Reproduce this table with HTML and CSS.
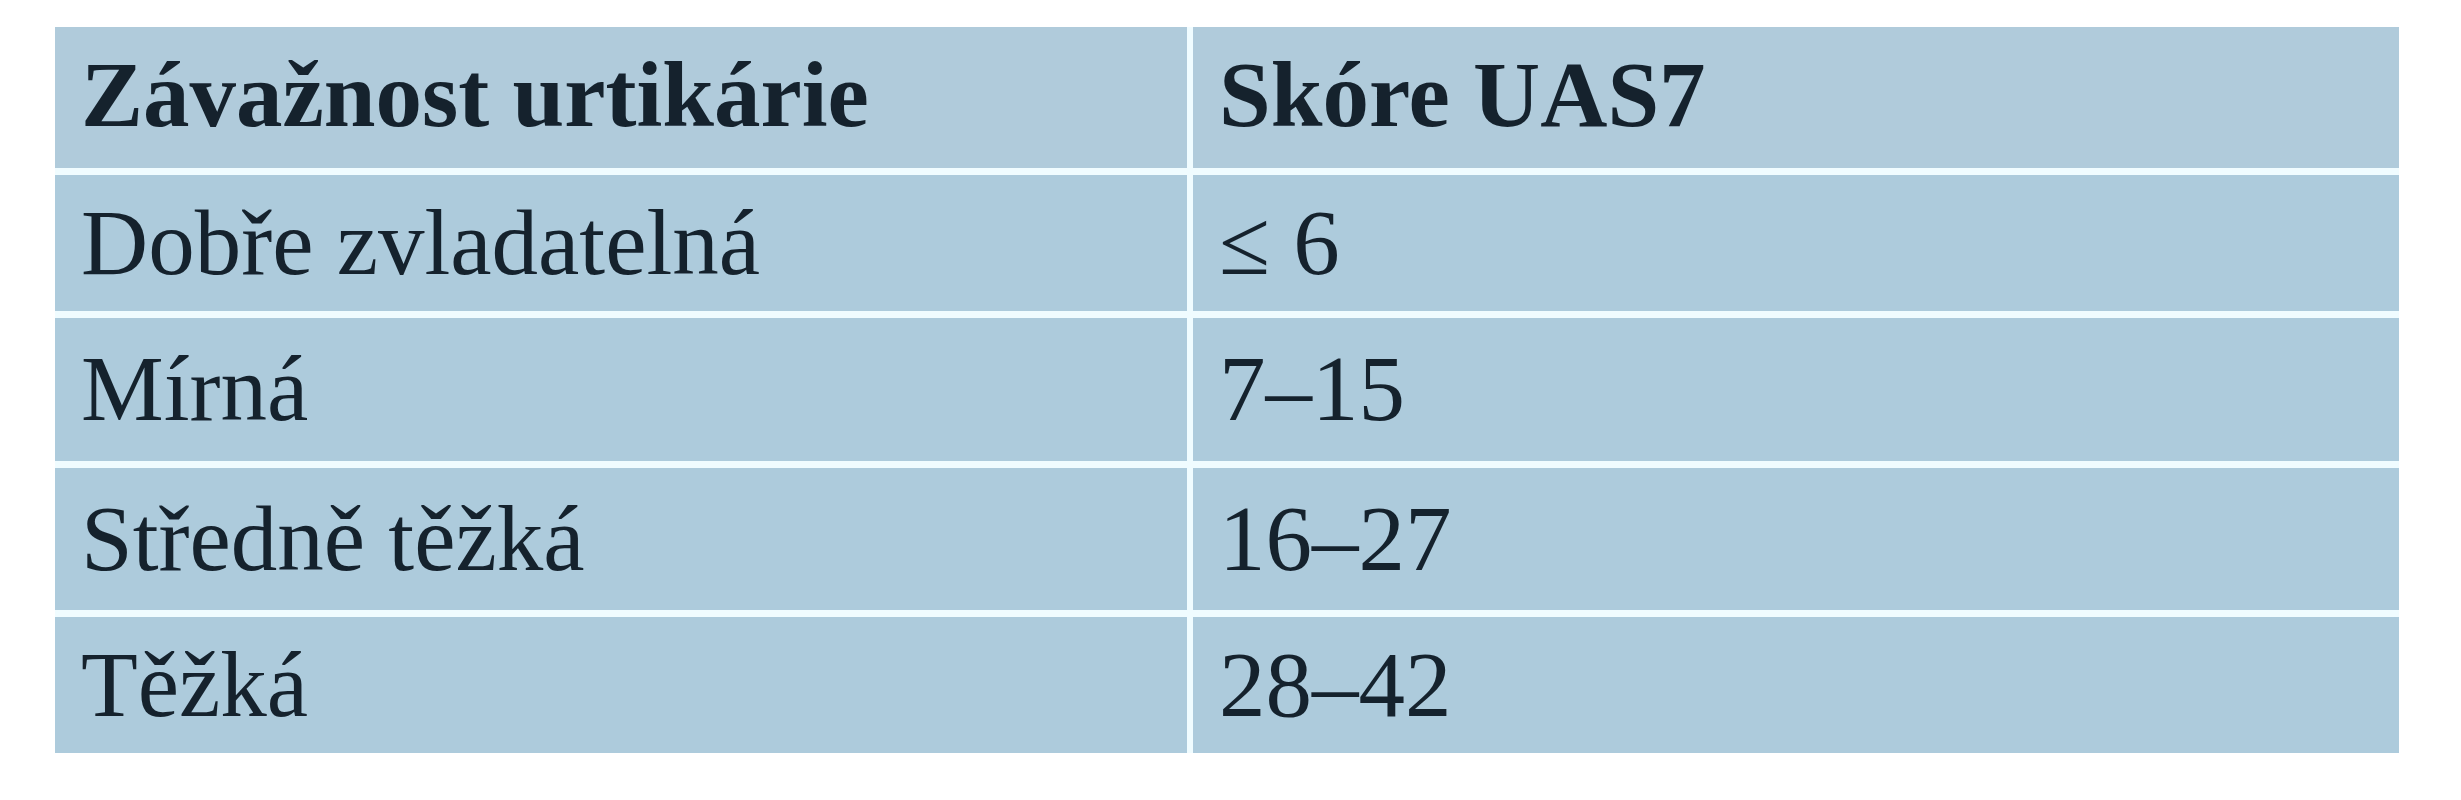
FILE: index.html
```html
<!DOCTYPE html>
<html lang="cs">
<head>
<meta charset="utf-8">
<title>Závažnost urtikárie</title>
<link rel="stylesheet" href="styles.css">
</head>
<body>
<div class="page">
  <div class="table" role="table">
    <div class="cell head" role="columnheader">Závažnost urtikárie</div>
    <div class="cell head" role="columnheader">Skóre UAS7</div>
    <div class="cell" role="cell">Dobře zvladatelná</div>
    <div class="cell" role="cell">≤ 6</div>
    <div class="cell" role="cell">Mírná</div>
    <div class="cell" role="cell">7–15</div>
    <div class="cell" role="cell">Středně těžká</div>
    <div class="cell" role="cell">16–27</div>
    <div class="cell" role="cell">Těžká</div>
    <div class="cell" role="cell">28–42</div>
  </div>
</div>
</body>
</html>
```

FILE: styles.css
```css
html, body {
  margin: 0;
  padding: 0;
  background: #ffffff;
}

.page {
  padding: 27px 0 0 55px;
}

.table {
  display: inline-grid;
  grid-template-columns: 1132px 1206px;
  grid-template-rows: 141px 136px 143px 142px 136px;
  column-gap: 6px;
  row-gap: 7px;
  background: #f0fcff;
  font-family: "Liberation Serif", "Times New Roman", serif;
  font-size: 93px;
  color: #15222d;
}

.cell {
  display: flex;
  align-items: center;
  padding: 0 0 2px 26px;
  background: #adcbdc;
  white-space: nowrap;
}

.head {
  font-weight: bold;
  background: #b0cbdb;
  padding-bottom: 6px;
}
```
